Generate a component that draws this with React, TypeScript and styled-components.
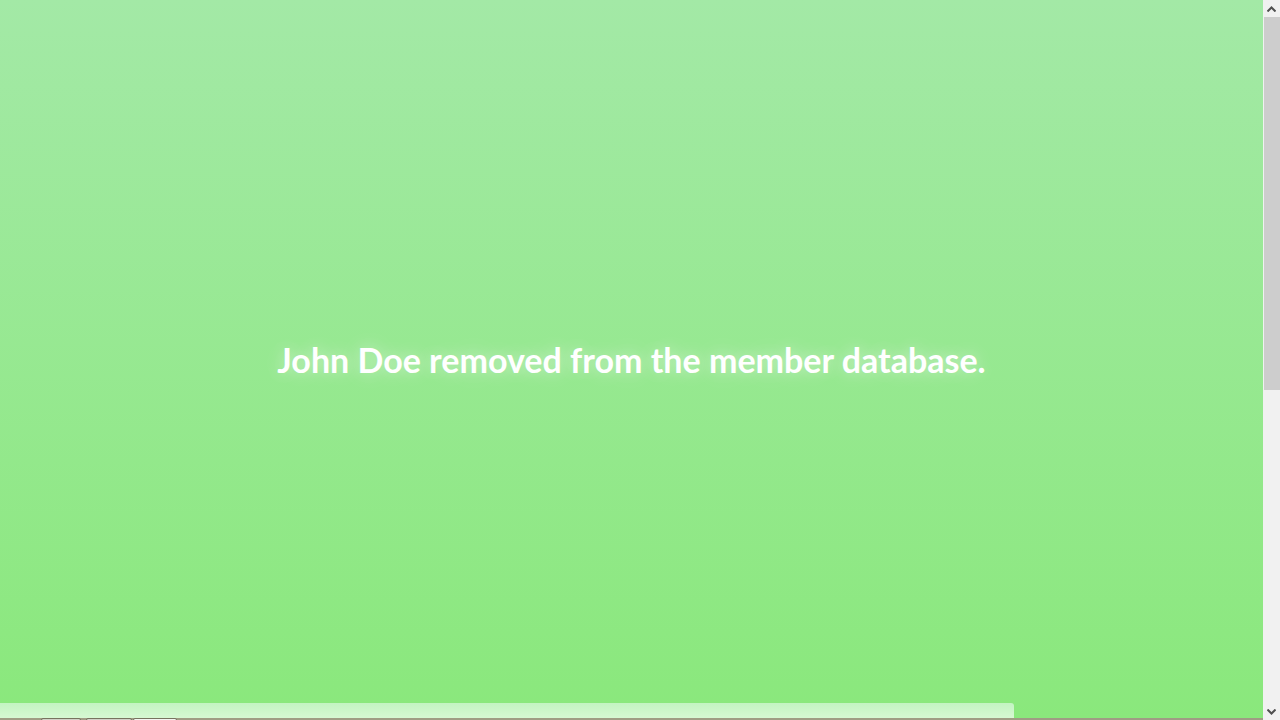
import React from "react";
import styled, { createGlobalStyle } from "styled-components";

const Global = createGlobalStyle`
  html, body { margin: 0; padding: 0; overflow: hidden; }
  body {
    font-family: Lato, "Open Sans", sans-serif;
    background: #a09c84;
  }
`;

const Window = styled.div`
  display: flex;
  width: 1280px;
  height: 720px;
  overflow: hidden;
`;

const Viewport = styled.div`
  flex: 1;
  display: flex;
  flex-direction: column;
  min-width: 0;
  background: #a09c84;
`;

const Stage = styled.div`
  display: flex;
  flex-direction: column;
  flex: 0 0 718px;
  background: linear-gradient(to bottom, #a3e9a6 0%, #8ae87c 100%);
`;

const Hero = styled.section`
  flex: 1;
  display: flex;
  align-items: center;
  justify-content: center;
  padding-top: 15px;
`;

const Message = styled.h1`
  margin: 0;
  font-family: Lato, sans-serif;
  font-weight: 700;
  font-size: 34px;
  color: #ffffff;
  text-shadow: 0 0 14px rgba(255, 255, 255, 0.4), 0 0 28px rgba(255, 255, 255, 0.25);
`;

const Drawer = styled.div`
  width: 1014px;
  height: 15px;
  border-top-right-radius: 3px;
  background: linear-gradient(to bottom, #c3f4c2 0%, #d6f8d2 100%);
`;

const TabBar = styled.div`
  display: flex;
  padding-left: 41px;
  flex: 1;
  background: #a09c84;
`;

const Tab = styled.div<{ $w: number; $ml: number; $active?: boolean }>`
  width: ${(p) => p.$w}px;
  margin-left: ${(p) => p.$ml}px;
  height: 24px;
  box-sizing: border-box;
  border: 1px solid #77735f;
  border-radius: 2px 2px 0 0;
  background: ${(p) => (p.$active ? "#f4f4f0" : "#d2d0c6")};
`;

const Scrollbar = styled.div`
  flex: 0 0 17px;
  display: flex;
  flex-direction: column;
  background: #f1f1f1;
`;

const Arrow = styled.div`
  flex: 0 0 17px;
  display: flex;
  align-items: center;
  justify-content: center;
`;

const Track = styled.div`
  flex: 1;
  display: flex;
  flex-direction: column;
  padding: 0 0 0 1px;
`;

const Thumb = styled.div`
  height: 373px;
  background: #cdcdcd;
`;

const Chevron = ({ up }: { up?: boolean }) => (
  <svg width="9" height="6" viewBox="0 0 9 6">
    <path
      d={up ? "M0.5 5.5 L4.5 1.5 L8.5 5.5" : "M0.5 0.5 L4.5 4.5 L8.5 0.5"}
      fill="none"
      stroke="#505050"
      strokeWidth="2"
    />
  </svg>
);

export default function App() {
  return (
    <Window>
      <Global />
      <Viewport>
        <Stage>
          <Hero>
            <Message>John Doe removed from the member database.</Message>
          </Hero>
          <Drawer />
        </Stage>
        <TabBar>
          <Tab $w={40} $ml={0} />
          <Tab $w={46} $ml={5} />
          <Tab $w={44} $ml={1} $active />
        </TabBar>
      </Viewport>
      <Scrollbar>
        <Arrow>
          <Chevron up />
        </Arrow>
        <Track>
          <Thumb />
        </Track>
        <Arrow>
          <Chevron />
        </Arrow>
      </Scrollbar>
    </Window>
  );
}
